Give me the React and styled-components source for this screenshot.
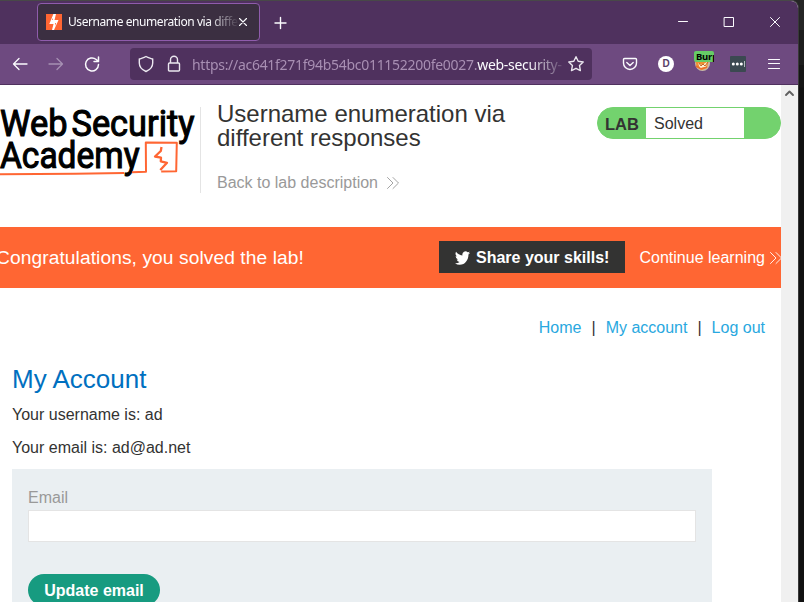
import React from "react";
import styled, { createGlobalStyle } from "styled-components";

const Global = createGlobalStyle`
  * { box-sizing: border-box; }
  html, body { margin: 0; height: 602px; overflow: hidden; background: #151515; }
  body { font-family: "Liberation Sans", Arial, sans-serif; font-size: 16px; color: #333332; }
  svg { display: block; flex: none; overflow: visible; }
  h1, h2, p { margin: 0; font-weight: 400; }
`;

const Desktop = styled.div`
  width: 804px;
  height: 602px;
  overflow: hidden;
  background: linear-gradient(#252525 0 30px, #1d1d1d 30px 65px, #151515 65px 87px, #111 88px);
`;
const BrowserWindow = styled.div`
  width: 799px;
  height: 602px;
  display: flex;
  flex-direction: column;
  border-top: 1px solid #484848;
  border-right: 1px solid #393939;
  border-radius: 0 8px 0 0;
  overflow: hidden;
  background: #fff;
`;
const TabBar = styled.div`
  height: 43px;
  flex: none;
  display: flex;
  align-items: flex-start;
  padding: 2px 18px 0 37px;
  background: #4f315e;
`;
const Tab = styled.div`
  width: 223px;
  height: 38px;
  display: flex;
  align-items: center;
  padding: 0 12px 0 8px;
  border: 1px solid #8f5cac;
  border-radius: 4px;
  background: #3b2f41;
`;
const TabTitle = styled.span`
  width: 170px;
  margin: 0 1px 0 6px;
  overflow: hidden;
  white-space: nowrap;
  font: 12px/18px "Noto Sans", sans-serif;
  letter-spacing: -0.42px;
  color: #fbfbfe;
  mask-image: linear-gradient(90deg, #000 140px, transparent 171px);
`;
const NewTab = styled.div`
  margin: 14px 0 0 14px;
`;
const WindowControls = styled.div`
  display: flex;
  gap: 36px;
  margin: 12px 0 0 auto;
`;
const Toolbar = styled.div`
  height: 41px;
  flex: none;
  display: flex;
  align-items: center;
  padding: 0 18px 0 12px;
  background: #6e4a80;
  border-bottom: 1px solid #4f315e;
`;
const NavButtons = styled.div`
  width: 118px;
  display: flex;
  gap: 20px;
`;
const AddressBar = styled.div`
  width: 462px;
  height: 32px;
  display: flex;
  align-items: center;
  padding: 0 8px;
  border-radius: 4px;
  background: #4f315e;
`;
const Url = styled.span`
  width: 370px;
  margin: 2px 6px 0 10px;
  overflow: hidden;
  white-space: nowrap;
  font: 14px/20px "Noto Sans", sans-serif;
  letter-spacing: -0.29px;
  color: #a88fb3;
  mask-image: linear-gradient(90deg, #000 335px, transparent 375px);
  b { font-weight: 400; letter-spacing: -0.28px; color: #fbfbfe; }
`;
const LockSlot = styled.span`
  margin-left: 12px;
`;
const Extensions = styled.div`
  display: flex;
  align-items: center;
  gap: 20px;
  margin-left: auto;
`;
const PocketSlot = styled.span`
  margin-right: 1px;
`;
const MenuSlot = styled.span`
  margin-left: 2px;
`;
const Avatar = styled.span`
  width: 16px;
  height: 16px;
  border-radius: 50%;
  background: #fff;
  color: #594067;
  font: 700 10px/16px "Liberation Sans", sans-serif;
  text-align: center;
`;
const BurpExtension = styled.span`
  position: relative;
  width: 16px;
  height: 16px;
`;
const BurpBadge = styled.span`
  position: absolute;
  left: 0;
  top: -5px;
  width: 20px;
  height: 11px;
  padding-left: 2px;
  overflow: hidden;
  border-radius: 2px 2px 0 2px;
  background: #66cc66;
  color: #000;
  font: 700 9.5px/12px "Noto Sans", sans-serif;
  letter-spacing: -0.2px;
`;
const Viewport = styled.div`
  flex: 1;
  min-height: 0;
  display: flex;
`;
const Page = styled.main`
  width: 781px;
  overflow: hidden;
  background: #fff;
`;
const Scrollbar = styled.div`
  width: 17px;
  display: flex;
  justify-content: center;
  padding-top: 5px;
  background: #f0f0f0;
`;
const LabHeader = styled.header`
  height: 142px;
  display: flex;
  align-items: flex-start;
  padding-top: 22px;
`;
const LogoBox = styled.div`
  width: 201px;
  height: 86px;
  border-right: 1px solid #e4e4e4;
`;
const LabTitle = styled.div`
  width: 380px;
  margin: -5px 0 0 16px;
`;
const Heading = styled.h1`
  font-size: 24px;
  line-height: 24px;
`;
const Back = styled.div`
  display: flex;
  align-items: center;
  gap: 9px;
  margin-top: 23px;
  line-height: 20px;
  color: #999;
`;
const Status = styled.div`
  width: 184px;
  height: 32px;
  display: flex;
  border: 1px solid #73d26e;
  border-radius: 16px;
  overflow: hidden;
  background: #73d26e;
  line-height: 31px;
`;
const LabLabel = styled.strong`
  width: 48px;
  padding: 1px 0 0 7px;
  font-size: 16.5px;
`;
const LabState = styled.span`
  width: 98px;
  padding-left: 8px;
  background: #fff;
`;
const Banner = styled.section`
  height: 61px;
  display: flex;
  align-items: center;
  background: #ff6633;
  color: #fff;
  white-space: nowrap;
`;
const Congrats = styled.p`
  width: 443px;
  flex: none;
  margin-left: -4px;
  font-size: 19.2px;
  letter-spacing: 0.08px;
`;
const Share = styled.div`
  width: 186px;
  height: 32px;
  flex: none;
  display: flex;
  align-items: center;
  gap: 6px;
  padding: 1px 0 0 16px;
  margin: 0 14.5px 1px 0;
  background: #333332;
  font-weight: 700;
`;
const Continue = styled.div`
  flex: none;
  display: flex;
  align-items: center;
  gap: 5px;
`;
const Links = styled.nav`
  display: flex;
  justify-content: flex-end;
  gap: 10px;
  padding: 30px 16px 0 0;
  line-height: 20px;
  a { color: #29a8e0; }
`;
const Account = styled.section`
  padding: 24px 0 0 12px;
`;
const AccountTitle = styled.h2`
  font-size: 26px;
  line-height: 34px;
  color: #0070c0;
`;
const Detail = styled.p`
  line-height: 20px;
  margin-top: ${(p) => p.$gap}px;
`;
const Form = styled.div`
  width: 700px;
  height: 180px;
  margin-top: 11px;
  padding: 19px 16px;
  background: #eaeff2;
`;
const Label = styled.label`
  display: block;
  line-height: 20px;
  color: #999;
`;
const Input = styled.input`
  display: block;
  width: 668px;
  height: 32px;
  margin: 2px 0 32px;
  border: 1px solid #e4e4e4;
  background: #fff;
`;
const Update = styled.button`
  width: 132px;
  height: 32px;
  padding: 2px 0 0;
  border: 0;
  border-radius: 16px;
  background: #179b80;
  color: #fff;
  font: 700 16px/30px "Liberation Sans", sans-serif;
`;

function Line({ d, size = 16, width = 1.3, color = "#fbfbfe", opacity = 1, h = size }) {
  return (
    <svg width={size} height={h} viewBox={`0 0 ${size} ${h}`} fill="none" stroke={color}
      strokeWidth={width} strokeLinecap="round" strokeLinejoin="round" opacity={opacity}>
      <path d={d} />
    </svg>
  );
}

const Favicon = () => (
  <svg width="16" height="16" viewBox="0 0 16 16">
    <path fill="#ff6633" d="M0 0h16v16H0z" />
    <path fill="#fff" d="M7.4 0H10L8.5 6h4L8 16H6l1.5-6H3.3z" />
    <path fill="#ff6633" d="M7 4v2H6zM9 9h1l-1 3z" />
  </svg>
);

const Logo = () => (
  <svg width="200" height="86" viewBox="0 107 200 86">
    <g fill="#000" stroke="#000" strokeWidth="1.1" fontFamily="Roboto, sans-serif" fontWeight="400" fontSize="36.6">
      <text x="0" y="135.500" textLength="67.500" lengthAdjust="spacingAndGlyphs">Web</text>
      <text x="71.500" y="135.500" textLength="123" lengthAdjust="spacingAndGlyphs">Security</text>
      <text x="0" y="168" textLength="139.500" lengthAdjust="spacingAndGlyphs">Academy</text>
    </g>
    <g fill="none" stroke="#ff6633" strokeLinejoin="round">
      <path strokeWidth="2" d="M0 174.200L75 173.700 124 173M132 172.300l14-.5-.2-29.300 31 .2-.6 28.600-15 .2" />
      <path strokeWidth="2.300" d="M161.500 147l-.7 4-5.800 5.500 6 1.200-.2 3.600 6.200 1.500-6.700 7.200" />
    </g>
  </svg>
);

const Twitter = () => (
  <svg width="15" height="14" viewBox="0 2 24 20" preserveAspectRatio="none">
    <path fill="#fff" d="M24 4.6c-.9.4-1.8.7-2.8.8 1-.6 1.800-1.600 2.200-2.700-1 .6-2 1-3.100 1.200a4.920 4.920 0 0 0-8.400 4.500C7.700 8.200 4.100 6.200 1.700 3.200a4.920 4.920 0 0 0 1.500 6.600c-.8 0-1.600-.2-2.200-.6v.1a4.920 4.920 0 0 0 3.900 4.800c-.7.2-1.500.2-2.200.1a4.920 4.920 0 0 0 4.600 3.400A9.900 9.900 0 0 1 0 19.500 13.900 13.900 0 0 0 7.500 21.700c9.100 0 14-7.500 14-14v-.6c1-.7 1.800-1.600 2.500-2.500z" />
  </svg>
);

const BurpIcon = () => (
  <svg width="16" height="16" viewBox="0 0 16 16">
    <circle cx="8.500" cy="7.500" r="7.500" fill="#c9b9a5" />
    <path fill="#ef8f32" d="M1 4l14-1-2 9-5 2-5-3z" />
    <path fill="#fff0d2" d="M4 7l4 2 5-3-1 5-6 1z" />
    <path fill="none" stroke="#c26a2c" strokeWidth="1" d="M5 7l2 3 2-2 2 2 3-4" />
    <path fill="none" stroke="#ed702a" strokeWidth="1.500" d="M2 10l5 3 6-2" />
  </svg>
);

const PasswordIcon = () => (
  <svg width="16" height="16" viewBox="0 0 16 16">
    <rect width="16" height="16" rx="1" fill="#3b4951" />
    <g fill="#fff"><circle cx="3.300" cy="8" r="1.500" /><circle cx="7.300" cy="8" r="1.500" /><circle cx="11.300" cy="8" r="1.500" /></g>
    <path stroke="#b2b9be" d="M14.500 5v6" />
  </svg>
);

export default function App() {
  return (
    <Desktop>
      <Global />
      <BrowserWindow>
        <TabBar>
          <Tab>
            <Favicon />
            <TabTitle>Username enumeration via different responses</TabTitle>
            <Line size={8} width={1.100} d="M.5 .5l7 7M7.500 .5l-7 7" />
          </Tab>
          <NewTab><Line size={12} width={1.400} d="M6.500 .5v11M1 6h11" /></NewTab>
          <WindowControls>
            <Line size={10} width={1} d="M.5 6.500h9" />
            <Line size={10} width={1} d="M.5 2.500h9v9h-9z" />
            <Line size={10} width={1} d="M.5 2.500l9 9M9.500 2.500l-9 9" />
          </WindowControls>
        </TabBar>
        <Toolbar>
          <NavButtons>
            <Line d="M15 8H1.500M7 2.500L1.500 8 7 13.500" />
            <Line opacity={0.4} d="M1 8h13.500M9 2.500L14.500 8 9 13.500" />
            <Line width={1.500} d="M14.500 8.500A6.500 6.500 0 1 1 12.200 3.500L14 5M14.500 1v4.500H10" />
          </NavButtons>
          <AddressBar>
            <Line opacity={0.9} width={1.400} d="M8 .5C6 1.800 3.500 2.200 1.300 3v4c0 4 2.500 6.700 6.700 8.500 4.200-1.800 6.700-4.500 6.700-8.500V3C12.500 2.200 10 1.800 8 .5z" />
            <LockSlot><Line opacity={0.9} width={1.400} d="M4.500 7V3.800a3.500 3.500 0 0 1 7 0V7M3.500 7h9q1 0 1 1v6q0 1-1 1h-9q-1 0-1-1V8q0-1 1-1z" /></LockSlot>
            <Url>https://ac641f271f94b54bc011152200fe0027.<b>web-security-academy.net</b></Url>
            <Line opacity={0.9} width={1.400} d="M8 .7l2.200 4.600 5 .7-3.700 3.600.9 5L8 12.300l-4.500 2.300.9-5L.8 6l5-.7z" />
          </AddressBar>
          <Extensions>
            <PocketSlot><Line size={14} h={16} width={1.400} d="M1.500 2.500h11q1 0 1 1V7a6.500 6.500 0 0 1-13 0V3.500q0-1 1-1zM3.800 6.500L7 9.500l3.200-3" /></PocketSlot>
            <Avatar>D</Avatar>
            <BurpExtension><BurpIcon /><BurpBadge>Burp</BurpBadge></BurpExtension>
            <PasswordIcon />
            <MenuSlot><Line size={12} width={1.200} d="M.5 1.500h11M.5 5.500h11M.5 10.500h11" /></MenuSlot>
          </Extensions>
        </Toolbar>
        <Viewport>
          <Page>
            <LabHeader>
              <LogoBox><Logo /></LogoBox>
              <LabTitle>
                <Heading>Username enumeration via<br />different responses</Heading>
                <Back>Back to lab description <Line size={12} width={0.900} color="#999" d="M.5 .5L6 6 .5 11.500M6 .5L11.500 6 6 11.500" /></Back>
              </LabTitle>
              <Status><LabLabel>LAB</LabLabel><LabState>Solved</LabState></Status>
            </LabHeader>
            <Banner>
              <Congrats>Congratulations, you solved the lab!</Congrats>
              <Share><Twitter />Share your skills!</Share>
              <Continue>Continue learning <Line size={12} width={0.900} color="#fff" d="M.5 .5L6 6 .5 11.500M6 .5L11.500 6 6 11.500" /></Continue>
            </Banner>
            <Links><a>Home</a><span>|</span><a>My account</a><span>|</span><a>Log out</a></Links>
            <Account>
              <AccountTitle>My Account</AccountTitle>
              <Detail $gap={9}>Your username is: ad</Detail>
              <Detail $gap={13}>Your email is: ad@ad.net</Detail>
              <Form>
                <Label>Email</Label>
                <Input aria-label="Email" />
                <Update>Update email</Update>
              </Form>
            </Account>
          </Page>
          <Scrollbar><Line size={9} h={6} width={1.900} color="#606060" d="M1 5l3.500-3.500L8 5" /></Scrollbar>
        </Viewport>
      </BrowserWindow>
    </Desktop>
  );
}
